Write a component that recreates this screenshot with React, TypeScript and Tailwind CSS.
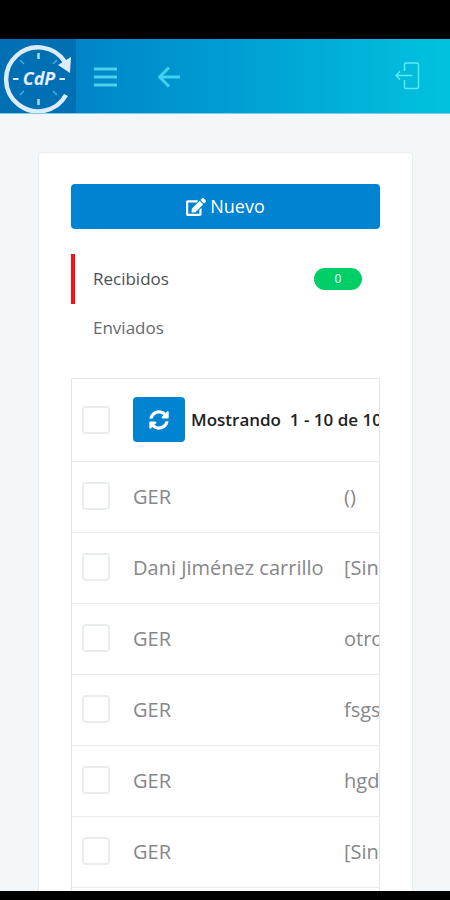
import { FaEdit, FaSyncAlt } from "react-icons/fa";

type Message = {
  id: number;
  sender: string;
  subject: string;
};

const messages: Message[] = [
  { id: 1, sender: "GER", subject: "()" },
  { id: 2, sender: "Dani Jiménez carrillo", subject: "[Sin asunto]" },
  { id: 3, sender: "GER", subject: "otro" },
  { id: 4, sender: "GER", subject: "fsgs" },
  { id: 5, sender: "GER", subject: "hgd" },
  { id: 6, sender: "GER", subject: "[Sin asunto]" },
  { id: 7, sender: "GER", subject: "[Sin asunto]" },
];

function Logo() {
  return (
    <svg viewBox="0 0 76 74" className="h-full w-full" fill="none" aria-label="CdP" role="img">
      <path d="M66 56 A32 32 0 1 1 65 23" stroke="#dcecff" strokeWidth="4.500" />
      <path d="M71 18 L70 34 L58 26 Z" fill="#dcecff" />
      <g stroke="#a5dcf5" strokeWidth="2.500">
        <path d="M38.500 14v6M38.500 60v6" />
        <path d="M13 40h5.500M59.500 40h5.500" stroke="#dcecff" strokeWidth="2" />
      </g>
      <g stroke="#3fb2dc" strokeWidth="1.500">
        <path d="M20 21l4 4M57 21l-4 4M20 56l4-4M57 56l-4-4" />
      </g>
      <text
        x="39"
        y="46"
        textAnchor="middle"
        fill="#e4efff"
        fontFamily="Open Sans, sans-serif"
        fontSize="18"
        fontStyle="italic"
        fontWeight="700"
      >
        CdP
      </text>
    </svg>
  );
}

function Header() {
  return (
    <header className="flex h-[75px] shrink-0 items-center border-b border-[#7fcbe4] bg-linear-to-r from-[#0078c4] to-[#00c2de]">
      <a href="#inicio" className="h-full w-[76px] bg-[#006fb4]">
        <Logo />
      </a>
      <button type="button" aria-label="Menú" className="ml-4 p-0.5">
        <svg viewBox="0 0 24 24" className="size-6" stroke="#4bd0ee" strokeWidth="3">
          <path d="M0 5h23M0 13h23M0 21h23" />
        </svg>
      </button>
      <button type="button" aria-label="Volver" className="ml-9 p-0.5">
        <svg viewBox="0 0 24 24" className="size-6" fill="none" stroke="#3fd2ec" strokeWidth="3">
          <path d="M22 13H2M11 3.500L1.500 13l9.500 9.500" />
        </svg>
      </button>
      <button type="button" aria-label="Salir" className="mr-7 ml-auto">
        <svg viewBox="0 0 28 28" className="size-7" fill="none" stroke="#5deaf8" strokeWidth="1.500">
          <path d="M10.500 9V2.500a1.500 1.500 0 0 1 1.500-1.500h11a1.500 1.500 0 0 1 1.500 1.500v22.500a1.500 1.500 0 0 1-1.500 1.500h-11a1.500 1.500 0 0 1-1.500-1.500V18" />
          <path d="M18.500 13.500H2.500M6 9.500L2 13.500 6 17.500" />
        </svg>
      </button>
    </header>
  );
}

function Checkbox({ label }: { label: string }) {
  return (
    <input
      type="checkbox"
      aria-label={label}
      className="block size-7 appearance-none rounded border-2 border-[#e9eded] bg-white checked:bg-[#0084d1]"
    />
  );
}

function MessageTable() {
  return (
    <div className="mt-[26px] overflow-hidden border border-[#e3e6e7]">
      <table className="w-[480px] table-fixed text-left">
        <colgroup>
          <col className="w-[61px]" />
          <col className="w-[211px]" />
          <col />
        </colgroup>
        <thead>
          <tr className="h-[82px] border-b border-[#e8ecee]">
            <th className="pl-2.5">
              <Checkbox label="Seleccionar todos" />
            </th>
            <th colSpan={2} className="font-semibold text-[#222222]">
              <div className="flex items-center gap-1.5">
                <button
                  type="button"
                  aria-label="Actualizar"
                  className="flex h-[45px] w-[52px] items-center justify-center rounded bg-[#0084d1] text-white"
                >
                  <FaSyncAlt className="size-5" />
                </button>
                <span className="text-[17px] whitespace-pre">Mostrando  1 - 10 de 10</span>
              </div>
            </th>
          </tr>
        </thead>
        <tbody className="text-[20px] text-[#858789]">
          {messages.map((m) => (
            <tr key={m.id} className="h-[71px] border-b border-[#e8ecee]">
              <td className="pb-0.5 pl-2.5">
                <Checkbox label={`Seleccionar mensaje ${m.id}`} />
              </td>
              <td className="whitespace-nowrap">{m.sender}</td>
              <td className="whitespace-nowrap">{m.subject}</td>
            </tr>
          ))}
        </tbody>
      </table>
    </div>
  );
}

export default function App() {
  return (
    <div className="flex h-screen flex-col bg-black font-['Open_Sans',sans-serif]">
      <div className="h-[39px] shrink-0" />
      <Header />
      <main className="min-h-0 flex-1 overflow-hidden bg-[#f3f7f9] pt-[38px] pr-[37px] pl-[38px]">
        <section className="rounded border border-[#e8eded] bg-white px-8 pt-[31px]">
          <button
            type="button"
            className="flex h-[45px] w-full items-center justify-center gap-1 rounded bg-[#0084d1] text-[18px] text-white"
          >
            <FaEdit className="size-5" />
            Nuevo
          </button>
          <nav className="mt-[25px] text-[17px] text-[#67696b]">
            <a
              href="#recibidos"
              className="flex h-[50px] items-center justify-between border-l-4 border-[#fb1010] pr-[18px] pl-[18px] text-[#4d4f51]"
            >
              Recibidos
              <span className="flex h-[22px] w-12 items-center justify-center rounded-full bg-[#00cf68] text-xs text-white">
                0
              </span>
            </a>
            <a href="#enviados" className="flex h-12 items-center pl-[22px]">
              Enviados
            </a>
          </nav>
          <MessageTable />
        </section>
      </main>
      <div className="h-[9px] shrink-0" />
    </div>
  );
}
